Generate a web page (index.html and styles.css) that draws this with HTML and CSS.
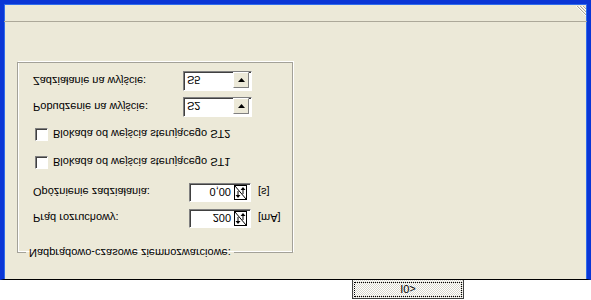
FILE: index.html
```html
<!DOCTYPE html>
<html lang="pl">
  <head>
    <meta charset="UTF-8" />
    <title>Nadprądowo-czasowe ziemnozwarciowe</title>
    <link rel="stylesheet" href="styles.css">
  </head>
  <body>
    <!-- the capture is mirrored top-to-bottom, so the whole screen is flipped -->
    <div class="screen">
      <div class="tabs">
        <div class="tab">I0&gt;</div>
      </div>

      <div class="window">
        <div class="client">
          <fieldset class="group">
            <legend>Nadprądowo-czasowe ziemnozwarciowe:</legend>
            <div class="rows">
              <div class="field spin-row">
                <span class="field-label">Prąd rozruchowy:</span>
                <div class="spin">
                  <span class="spin-value">200</span>
                  <svg class="spin-icon" width="13" height="15" viewBox="0 0 13 15">
                    <rect x="0.5" y="0.5" width="12" height="14" fill="#fff" stroke="#000" />
                    <line x1="1" y1="14" x2="12" y2="1" stroke="#000" />
                    <path d="M4 2 L1.5 5 L6.5 5 Z M3.5 5 h1 v4 h-1 Z" fill="#000" />
                    <path d="M9 13 L6.5 10 L11.5 10 Z M8.5 6 h1 v4 h-1 Z" fill="#000" />
                  </svg>
                </div>
                <span class="unit">[mA]</span>
              </div>
              <div class="field spin-row second">
                <span class="field-label">Opóźnienie zadziałania:</span>
                <div class="spin">
                  <span class="spin-value">0,00</span>
                  <svg class="spin-icon" width="13" height="15" viewBox="0 0 13 15">
                    <rect x="0.5" y="0.5" width="12" height="14" fill="#fff" stroke="#000" />
                    <line x1="1" y1="14" x2="12" y2="1" stroke="#000" />
                    <path d="M4 2 L1.5 5 L6.5 5 Z M3.5 5 h1 v4 h-1 Z" fill="#000" />
                    <path d="M9 13 L6.5 10 L11.5 10 Z M8.5 6 h1 v4 h-1 Z" fill="#000" />
                  </svg>
                </div>
                <span class="unit">[s]</span>
              </div>
              <label class="check first">
                <span class="box"></span>
                Blokada od wejścia sterującego ST1
              </label>
              <label class="check">
                <span class="box"></span>
                Blokada od wejścia sterującego ST2
              </label>
              <div class="field combo-row">
                <span class="field-label">Pobudzenie na wyjście:</span>
                <div class="combo">
                  <span class="combo-value">S2</span>
                  <span class="combo-btn">
                    <svg width="7" height="4" viewBox="0 0 7 4"><path d="M0 0 H7 L3.5 4 Z" fill="#000" /></svg>
                  </span>
                </div>
              </div>
              <div class="field combo-row last">
                <span class="field-label">Zadziałanie na wyjście:</span>
                <div class="combo">
                  <span class="combo-value">S5</span>
                  <span class="combo-btn">
                    <svg width="7" height="4" viewBox="0 0 7 4"><path d="M0 0 H7 L3.5 4 Z" fill="#000" /></svg>
                  </span>
                </div>
              </div>
            </div>
          </fieldset>
        </div>

        <div class="statusbar">
          <svg class="grip" width="12" height="12" viewBox="0 0 12 12">
            <path d="M11 1 L1 11 M11 4 L4 11 M11 7 L7 11" stroke="#fff" />
            <path d="M11 2 L2 11 M11 5 L5 11 M11 8 L8 11" stroke="#aca899" />
          </svg>
        </div>
      </div>
    </div>
  </body>
</html>
```

FILE: styles.css
```css
* {
  box-sizing: border-box;
}
body {
  margin: 0;
  background: #fff;
  color: #000;
  font: 11px "Liberation Sans", Arial, sans-serif;
}
.screen {
  width: 591px;
  height: 300px;
  display: flex;
  flex-direction: column;
  overflow: hidden;
  transform: scaleY(-1);
}
.tabs {
  flex: none;
  height: 20px;
  padding: 1px 0 0 352px;
  background: #fff;
}
.tab {
  width: 112px;
  height: 19px;
  display: flex;
  align-items: center;
  justify-content: center;
  border: 1px solid #404040;
  border-bottom: none;
  outline: 1px dotted #000;
  outline-offset: -3px;
  background: repeating-conic-gradient(#fff 0 25%, #d8d6cc 0 50%) 0 0 / 2px 2px;
}
.window {
  flex: 1;
  display: flex;
  flex-direction: column;
  background: #ece9d8;
  border-top: 1px solid #000;
  border-left: 4px solid #0a36d6;
  border-right: 4px solid #0a36d6;
  border-bottom: 4px solid #0a36d6;
  box-shadow: inset 1px 0 #2f6cec, inset -1px 0 #2f6cec, inset 0 -1px #2f6cec;
}
.client {
  flex: 1;
  padding: 19px 0 0 13px;
}
.group {
  width: 276px;
  margin: 0;
  padding: 0;
  border: 1px solid #a3a198;
  box-shadow: 1px 1px 0 #fff, inset 1px 1px 0 #fff;
}
.group legend {
  margin-left: 8px;
  padding: 0 3px;
  line-height: 14px;
}
.rows {
  display: flex;
  flex-direction: column;
  padding: 18px 0 8px 15px;
}
.field {
  display: flex;
  align-items: center;
}
.field-label {
  width: 156px;
}
.spin-row.second {
  margin-top: 7px;
}
.spin {
  width: 62px;
  height: 19px;
  display: flex;
  align-items: center;
  justify-content: flex-end;
  gap: 3px;
  padding-right: 3px;
  background: #fff;
  border: 1px solid;
  border-color: #fff #fff #808080 #808080;
  box-shadow: inset 1px -1px 0 #404040;
}
.spin-icon {
  display: block;
}
.unit {
  margin-left: 7px;
}
.check {
  display: flex;
  align-items: center;
  height: 13px;
  margin-top: 15px;
  margin-left: 2px;
}
.check.first {
  margin-top: 14px;
}
.box {
  width: 13px;
  height: 13px;
  margin-right: 5px;
  background: #fff;
  border: 1px solid;
  border-color: #fff #fff #808080 #808080;
  box-shadow: inset 1px -1px 0 #404040;
}
.combo-row {
  margin-top: 11px;
}
.combo-row.last {
  margin-top: 6px;
}
.combo-row .field-label {
  width: 150px;
}
.combo {
  width: 69px;
  height: 20px;
  display: flex;
  padding: 2px 2px 2px 3px;
  background: #fff;
  border: 1px solid;
  border-color: #fff #fff #808080 #808080;
  box-shadow: inset 1px -1px 0 #404040;
}
.combo-value {
  flex: 1;
  line-height: 16px;
}
.combo-btn {
  width: 16px;
  height: 16px;
  display: flex;
  align-items: center;
  justify-content: center;
  background: #ece9d8;
  border: 1px solid;
  border-color: #808080 #808080 #fff #fff;
}
.combo-btn svg {
  display: block;
}
.statusbar {
  flex: none;
  height: 18px;
  display: flex;
  justify-content: flex-end;
  align-items: flex-end;
  border-top: 1px solid #aca899;
  padding: 0 0 1px 0;
}
.grip {
  display: block;
}
```
